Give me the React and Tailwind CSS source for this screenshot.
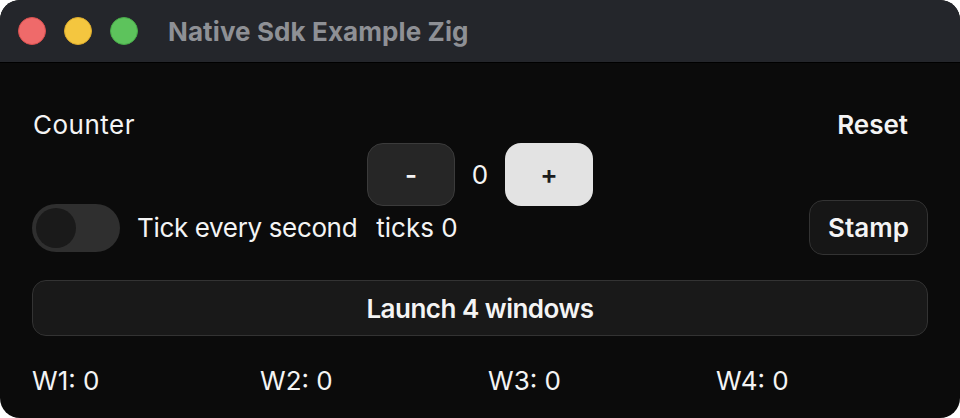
import { useState } from 'react';

const font = { fontFamily: 'Inter, "Noto Sans", sans-serif' };

export default function App() {
  const [count, setCount] = useState(0);
  const [ticking, setTicking] = useState(false);
  const [ticks] = useState(0);
  const windows = [0, 0, 0, 0];

  return (
    <div className="w-[960px] h-[418px] bg-white" style={font}>
      <div className="w-full h-full rounded-[20px] overflow-hidden bg-[#0b0b0b] flex flex-col">
        {/* Title bar */}
        <div className="h-[63px] shrink-0 bg-[#24262b] border-b border-black flex items-center pl-[18px]">
          <div className="flex gap-[18px]">
            <span className="w-[28px] h-[28px] rounded-full bg-[#ef6a6a] border border-[#d9504f]" />
            <span className="w-[28px] h-[28px] rounded-full bg-[#f4c63f] border border-[#dcab2d]" />
            <span className="w-[28px] h-[28px] rounded-full bg-[#5dc35c] border border-[#47a948]" />
          </div>
          <span className="ml-[30px] text-[26px] font-bold text-[#8e9095] tracking-[0.1px]">
            Native Sdk Example Zig
          </span>
        </div>

        {/* Content */}
        <div className="flex flex-col px-8 pt-[46px] text-[#f4f4f4]">
          <div className="flex items-center justify-between h-8">
            <span className="text-[26px] leading-8 pl-px tracking-[0.5px]">Counter</span>
            <button className="text-[26px] leading-8 font-semibold mr-[20px]">Reset</button>
          </div>

          <div className="flex items-center justify-center mt-[2px]">
            <button
              onClick={() => setCount(count - 1)}
              className="w-[88px] h-[63px] rounded-[16px] bg-[#262626] border border-[#3b3b3b] text-[26px] font-semibold"
            >
              -
            </button>
            <span className="w-[50px] text-center text-[26px]">{count}</span>
            <button
              onClick={() => setCount(count + 1)}
              className="w-[88px] h-[63px] rounded-[16px] bg-[#e3e3e3] text-[#1c1c1c] text-[26px] font-semibold"
            >
              +
            </button>
          </div>

          <div className="flex items-center justify-between -mt-[6px] h-[55px]">
            <div className="flex items-center">
              <button
                onClick={() => setTicking(!ticking)}
                className="w-[88px] h-[48px] rounded-full bg-[#2f2f2f] p-[4px] flex"
              >
                <span className="w-[40px] h-[40px] rounded-full bg-[#1a1a1a]" />
              </button>
              <span className="ml-[17px] text-[26px] tracking-[-0.35px]">Tick every second</span>
              <span className="ml-[19px] text-[26px]">ticks {ticks}</span>
            </div>
            <button className="w-[119px] h-[55px] rounded-[14px] bg-[#161616] border border-[#333] text-[26px] font-semibold">
              Stamp
            </button>
          </div>

          <button className="mt-[25px] h-[56px] w-full rounded-[14px] bg-[#191919] border border-[#333] text-[26px] font-semibold tracking-[-0.5px]">
            Launch 4 windows
          </button>

          <div className="grid grid-cols-[228px_228px_228px_228px] mt-[25px] text-[26px]">
            {windows.map((v, i) => (
              <span key={i}>
                W{i + 1}: {v}
              </span>
            ))}
          </div>
        </div>
      </div>
    </div>
  );
}
